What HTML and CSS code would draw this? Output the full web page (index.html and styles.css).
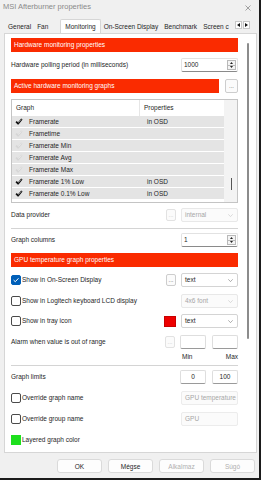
FILE: index.html
```html
<!DOCTYPE html>
<html lang="en">
<head>
    <meta charset="UTF-8">
    <title>MSI Afterburner properties</title>
    <link rel="stylesheet" href="styles.css">
</head>
<body>
<div class="window">
    <div class="titlebar">
        <span class="title">MSI Afterburner properties</span>
        <svg class="close" width="6" height="6" viewBox="0 0 6 6"><path d="M0.5 0.5 L5.5 5.5 M5.5 0.5 L0.5 5.5" stroke="#8c8c8c" stroke-width="0.8"/></svg>
    </div>

    <div class="tabbar">
        <div class="tabs">
            <span class="tab">General</span>
            <span class="tab">Fan</span>
            <span class="tab active">Monitoring</span>
            <span class="tab">On-Screen Display</span>
            <span class="tab">Benchmark</span>
            <span class="tab">Screen c</span>
        </div>
        <div class="tab-arrows">
            <span class="arrow"><svg width="3" height="4" viewBox="0 0 3 4"><path d="M3 0 L0 2 L3 4 Z" fill="#111"/></svg></span>
            <span class="arrow"><svg width="3" height="4" viewBox="0 0 3 4"><path d="M0 0 L3 2 L0 4 Z" fill="#111"/></svg></span>
        </div>
    </div>

    <div class="panel">
        <div class="page">
            <div class="bar">Hardware monitoring properties</div>

            <div class="row polling">
                <span>Hardware polling period (in milliseconds)</span>
                <div class="spin">
                    <span class="spin-val">1000</span>
                    <div class="spin-btns">
                        <span><svg width="3" height="2" viewBox="0 0 3 2"><path d="M0 2 L1.5 0 L3 2 Z" fill="#222"/></svg></span>
                        <span><svg width="3" height="2" viewBox="0 0 3 2"><path d="M0 0 L1.5 2 L3 0 Z" fill="#222"/></svg></span>
                    </div>
                </div>
            </div>

            <div class="row bar-row">
                <div class="bar wide">Active hardware monitoring graphs</div>
                <span class="dots big">...</span>
            </div>

            <div class="list">
                <div class="grid">
                    <div class="list-head">
                        <span class="col-graph">Graph</span>
                        <span class="col-props">Properties</span>
                    </div>
                    <div class="item">
                        <svg class="tick" width="8" height="7" viewBox="0 0 10 9"><path d="M1.3 4.6 L3.8 7.3 L8.7 1.3" fill="none" stroke="#111" stroke-width="2.3" stroke-linejoin="round"/><path d="M4.2 6 L8 1.8" stroke="#fff" stroke-width="0.6"/></svg>
                        <span class="item-name">Framerate</span><span class="item-props">in OSD</span>
                    </div>
                    <div class="item">
                        <svg class="tick off" width="8" height="7" viewBox="0 0 10 9"><path d="M1.3 4.6 L3.8 7.3 L8.7 1.3" fill="none" stroke="#d6d6d6" stroke-width="2.3" stroke-linejoin="round"/><path d="M4.2 6 L8 1.8" stroke="#fff" stroke-width="0.6"/></svg>
                        <span class="item-name">Frametime</span><span class="item-props"></span>
                    </div>
                    <div class="item">
                        <svg class="tick off" width="8" height="7" viewBox="0 0 10 9"><path d="M1.3 4.6 L3.8 7.3 L8.7 1.3" fill="none" stroke="#d6d6d6" stroke-width="2.3" stroke-linejoin="round"/><path d="M4.2 6 L8 1.8" stroke="#fff" stroke-width="0.6"/></svg>
                        <span class="item-name">Framerate Min</span><span class="item-props"></span>
                    </div>
                    <div class="item">
                        <svg class="tick off" width="8" height="7" viewBox="0 0 10 9"><path d="M1.3 4.6 L3.8 7.3 L8.7 1.3" fill="none" stroke="#d6d6d6" stroke-width="2.3" stroke-linejoin="round"/><path d="M4.2 6 L8 1.8" stroke="#fff" stroke-width="0.6"/></svg>
                        <span class="item-name">Framerate Avg</span><span class="item-props"></span>
                    </div>
                    <div class="item">
                        <svg class="tick off" width="8" height="7" viewBox="0 0 10 9"><path d="M1.3 4.6 L3.8 7.3 L8.7 1.3" fill="none" stroke="#d6d6d6" stroke-width="2.3" stroke-linejoin="round"/><path d="M4.2 6 L8 1.8" stroke="#fff" stroke-width="0.6"/></svg>
                        <span class="item-name">Framerate Max</span><span class="item-props"></span>
                    </div>
                    <div class="item">
                        <svg class="tick" width="8" height="7" viewBox="0 0 10 9"><path d="M1.3 4.6 L3.8 7.3 L8.7 1.3" fill="none" stroke="#111" stroke-width="2.3" stroke-linejoin="round"/><path d="M4.2 6 L8 1.8" stroke="#fff" stroke-width="0.6"/></svg>
                        <span class="item-name">Framerate 1% Low</span><span class="item-props">in OSD</span>
                    </div>
                    <div class="item">
                        <svg class="tick" width="8" height="7" viewBox="0 0 10 9"><path d="M1.3 4.6 L3.8 7.3 L8.7 1.3" fill="none" stroke="#111" stroke-width="2.3" stroke-linejoin="round"/><path d="M4.2 6 L8 1.8" stroke="#fff" stroke-width="0.6"/></svg>
                        <span class="item-name">Framerate 0.1% Low</span><span class="item-props">in OSD</span>
                    </div>
                </div>
                <div class="list-scroll"><div class="list-thumb"></div></div>
            </div>

            <div class="row provider">
                <span>Data provider</span>
                <div class="ctrl">
                    <span class="dots disabled">...</span>
                    <div class="select disabled"><span>internal</span><svg width="5" height="3" viewBox="0 0 5 3"><path d="M0.3 0.3 L2.5 2.6 L4.7 0.3" fill="none" stroke="#c4c4c4" stroke-width="0.6"/></svg></div>
                </div>
            </div>

            <div class="sep first"></div>

            <div class="row columns">
                <span>Graph columns</span>
                <div class="spin">
                    <span class="spin-val">1</span>
                    <div class="spin-btns">
                        <span><svg width="3" height="2" viewBox="0 0 3 2"><path d="M0 2 L1.5 0 L3 2 Z" fill="#222"/></svg></span>
                        <span><svg width="3" height="2" viewBox="0 0 3 2"><path d="M0 0 L1.5 2 L3 0 Z" fill="#222"/></svg></span>
                    </div>
                </div>
            </div>

            <div class="bar gpu">GPU temperature graph properties</div>

            <div class="row osd">
                <label class="opt"><span class="box on"><svg width="8" height="8" viewBox="0 0 8 8"><path d="M1.6 4.1 L3.3 5.7 L6.5 2.3" fill="none" stroke="#fff" stroke-width="1"/></svg></span>Show in On-Screen Display</label>
                <div class="ctrl">
                    <span class="dots">...</span>
                    <div class="select"><span>text</span><svg width="5" height="3" viewBox="0 0 5 3"><path d="M0.3 0.3 L2.5 2.6 L4.7 0.3" fill="none" stroke="#777" stroke-width="0.6"/></svg></div>
                </div>
            </div>

            <div class="row lcd">
                <label class="opt"><span class="box"></span>Show in Logitech keyboard LCD display</label>
                <div class="ctrl">
                    <div class="select disabled"><span>4x6 font</span><svg width="5" height="3" viewBox="0 0 5 3"><path d="M0.3 0.3 L2.5 2.6 L4.7 0.3" fill="none" stroke="#c4c4c4" stroke-width="0.6"/></svg></div>
                </div>
            </div>

            <div class="row tray">
                <label class="opt"><span class="box"></span>Show in tray icon</label>
                <div class="ctrl">
                    <span class="swatch"></span>
                    <div class="select"><span>text</span><svg width="5" height="3" viewBox="0 0 5 3"><path d="M0.3 0.3 L2.5 2.6 L4.7 0.3" fill="none" stroke="#777" stroke-width="0.6"/></svg></div>
                </div>
            </div>

            <div class="row alarm">
                <span>Alarm when value is out of range</span>
                <div class="ctrl">
                    <span class="dots disabled">...</span>
                    <div class="pair">
                        <span class="field"></span>
                        <span class="field"></span>
                    </div>
                </div>
            </div>

            <div class="row minmax">
                <span></span>
                <div class="minmax-labels"><span>Min</span><span>Max</span></div>
            </div>

            <div class="sep second"></div>

            <div class="row limits">
                <span>Graph limits</span>
                <div class="pair">
                    <span class="field">0</span>
                    <span class="field">100</span>
                </div>
            </div>

            <div class="row override">
                <label class="opt"><span class="box"></span>Override graph name</label>
                <span class="textbox">GPU temperature</span>
            </div>

            <div class="row override">
                <label class="opt"><span class="box"></span>Override group name</label>
                <span class="textbox">GPU</span>
            </div>

            <div class="row layered">
                <label class="opt"><span class="color-box"></span>Layered graph color</label>
            </div>
        </div>
        <div class="vscroll"><div class="vthumb"></div></div>
    </div>

    <div class="buttons">
        <button class="btn">OK</button>
        <button class="btn">Mégse</button>
        <button class="btn disabled">Alkalmaz</button>
        <button class="btn disabled">Súgó</button>
    </div>
</div>
</body>
</html>
```

FILE: styles.css
```css
:root {
    --window: #f0f0f0;
    --panel-border: #d6d6d6;
    --accent-red: #fa2b00;
    --text: #1e1e1e;
    --muted: #a6a6a6;
    --field-border: #d4d4d4;
    --row-grey: #e4e4e4;
}
* {
    margin: 0;
    padding: 0;
    box-sizing: border-box;
}
body {
    font-family: "Liberation Sans", Arial, sans-serif;
    font-size: 6.5px;
    line-height: 8px;
    color: var(--text);
    background-color: var(--window);
}
.window {
    width: 261px;
    height: 480px;
    background-color: var(--window);
    border-right: 2px solid #1b1b1b;
    border-bottom: 2px solid #1b1b1b;
    overflow: hidden;
}

/* Title bar and tabs */
.titlebar {
    height: 19px;
    display: flex;
    justify-content: space-between;
    align-items: flex-start;
    padding: 2px 8px 0 3px;
}
.title {
    font-size: 7.5px;
    line-height: 9px;
    color: #8a8a8a;
}
.close {
    margin-top: 3px;
}
.tabbar {
    height: 14px;
    display: flex;
    padding-left: 5px;
}
.tabs {
    display: flex;
    width: 230px;
    overflow: hidden;
}
.tab {
    padding: 0 3px;
    line-height: 13px;
    margin-top: 1px;
    white-space: nowrap;
}
.tab.active {
    position: relative;
    z-index: 1;
    height: 15px;
    margin: 0 0 0 9px;
    padding: 0 4px;
    line-height: 14px;
    background-color: #fff;
    border: 1px solid var(--panel-border);
    border-bottom: none;
    border-radius: 2px 2px 0 0;
}
.tab-arrows {
    display: flex;
    gap: 1px;
    margin-top: 2px;
}
.arrow {
    width: 7px;
    height: 8px;
    display: flex;
    align-items: center;
    justify-content: center;
    background-color: #fff;
    border: 1px solid #c8c8c8;
}

/* Tab page */
.panel {
    display: flex;
    width: 253px;
    height: 420px;
    margin-left: 4px;
    background-color: #fff;
    border: 1px solid var(--panel-border);
}
.page {
    width: 233px;
    padding: 4px 0 0 6px;
}
.vscroll {
    flex: 1;
}
.vthumb {
    width: 2px;
    height: 296px;
    margin: 9px 0 0 9px;
    background-color: #8c8c8c;
    border-radius: 1px;
}
.bar {
    height: 14px;
    padding-left: 3px;
    line-height: 14px;
    color: #fff;
    background-color: var(--accent-red);
}
.bar.wide {
    width: 208px;
}
.row {
    display: flex;
    justify-content: space-between;
    align-items: center;
    height: 14px;
}
.ctrl {
    display: flex;
    align-items: center;
    gap: 5px;
}

/* Inputs */
.spin {
    display: flex;
    width: 57px;
    height: 14px;
    border: 1px solid #e2e2e2;
    border-bottom-color: #8a8a8a;
    border-radius: 2px;
}
.spin-val {
    flex: 1;
    padding-left: 2px;
    line-height: 12px;
}
.spin-btns {
    width: 9px;
    margin: 1px 1px 1px 0;
    display: flex;
    flex-direction: column;
    border: 1px solid #b9b9b9;
}
.spin-btns span {
    flex: 1;
    display: flex;
    align-items: center;
    justify-content: center;
    background-color: #f4f4f4;
}
.spin-btns span + span {
    border-top: 1px solid #b9b9b9;
}
.dots {
    width: 10px;
    height: 12px;
    border: 1px solid #cdcdcd;
    border-radius: 2px;
    background-color: #fbfbfb;
    color: #555;
    font-size: 6px;
    line-height: 10px;
    text-align: center;
}
.dots.big {
    width: 13px;
    height: 14px;
    line-height: 12px;
}
.dots.disabled {
    color: #c4c4c4;
    border-color: #e2e2e2;
}
.select {
    width: 57px;
    height: 14px;
    display: flex;
    justify-content: space-between;
    align-items: center;
    padding: 0 4px 0 3px;
    border: 1px solid var(--field-border);
    border-radius: 2px;
    background-color: #fff;
}
.select.disabled {
    color: var(--muted);
    border-color: #e8e8e8;
    background-color: #fbfbfb;
}
.pair {
    display: flex;
    gap: 6px;
}
.field {
    width: 26px;
    height: 14px;
    border: 1px solid #dedede;
    border-bottom-color: #9a9a9a;
    border-radius: 2px;
    text-align: center;
    line-height: 12px;
}
.textbox {
    width: 57px;
    height: 14px;
    padding-left: 3px;
    line-height: 11px;
    color: var(--muted);
    border: 1px solid #ececec;
    background-color: #fbfbfb;
    border-radius: 2px;
}
.swatch {
    width: 12px;
    height: 11px;
    background-color: #ee0000;
    border: 1px solid #c80000;
}
.opt {
    display: flex;
    align-items: center;
}
.box {
    width: 10px;
    height: 10px;
    margin-right: 1px;
    border: 1px solid #4a4a4a;
    border-radius: 2px;
    background-color: #fff;
    display: flex;
    align-items: center;
    justify-content: center;
}
.box.on {
    background-color: #005fb8;
    border-color: #005fb8;
}
.color-box {
    width: 10px;
    height: 10px;
    margin-right: 1px;
    background-color: #1ee01e;
}

/* Graph list */
.list {
    display: flex;
    height: 104px;
    margin-top: 6px;
    border: 1px solid #c4c4c4;
}
.grid {
    width: 212px;
}
.list-head {
    display: flex;
    height: 16px;
    align-items: center;
}
.col-graph {
    width: 128px;
    padding-left: 4px;
    line-height: 16px;
    border-right: 1px solid #e6e6e6;
}
.col-props {
    padding-left: 4px;
}
.item {
    display: flex;
    align-items: center;
    height: 12px;
    padding-left: 3px;
    background-color: var(--row-grey);
    border-bottom: 1px solid #fff;
}
.tick {
    margin-right: 6px;
    flex-shrink: 0;
}
.item-name {
    width: 118px;
}
.list-scroll {
    flex: 1;
    background-color: #f3f3f3;
}
.list-thumb {
    width: 1px;
    height: 12px;
    margin: 78px 0 0 7px;
    background-color: #555;
}

/* Spacing of the page rows */
.polling { margin-top: 6px; }
.bar-row { margin-top: 7px; }
.provider { margin-top: 5px; }
.sep {
    height: 1px;
    background-color: #d4d4d4;
}
.sep.first { margin-top: 6px; }
.columns { margin-top: 4px; }
.gpu { margin-top: 6px; }
.osd { margin-top: 6px; }
.lcd { margin-top: 7px; }
.tray { margin-top: 6px; }
.alarm { margin-top: 7px; }
.minmax {
    height: 8px;
    margin-top: 4px;
}
.minmax-labels {
    width: 57px;
    display: flex;
    justify-content: space-between;
    padding-left: 1px;
}
.sep.second { margin-top: 4px; }
.limits { margin-top: 4px; }
.override { margin-top: 7px; }
.layered {
    height: 11px;
    margin-top: 8px;
}

/* Dialog buttons */
.buttons {
    display: flex;
    justify-content: flex-end;
    gap: 6px;
    padding: 6px 4px 0 0;
}
.btn {
    width: 45px;
    height: 14px;
    font-family: inherit;
    font-size: 6.5px;
    color: var(--text);
    background-color: #fdfdfd;
    border: 1px solid #dadada;
    border-radius: 3px;
}
.btn.disabled {
    color: #b0b0b0;
}
```
